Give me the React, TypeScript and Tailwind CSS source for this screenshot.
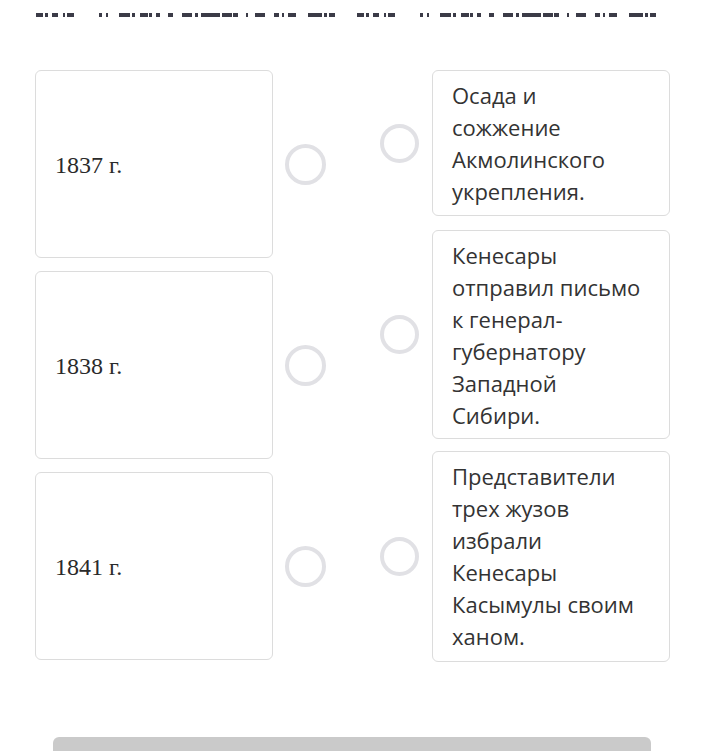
import React from "react";

const seg: [number, number][] = [
  [36, 7], [45, 3], [52, 6], [63, 2], [67, 7], [99, 3], [106, 2], [119, 11], [132, 3],
  [140, 8], [149, 3], [156, 4], [168, 5], [182, 10], [195, 3], [201, 19], [222, 10],
  [233, 5], [246, 2], [255, 10], [274, 5], [282, 2], [288, 8], [308, 14], [324, 3], [329, 6],
];

function Dashes() {
  const all: [number, number][] = [...seg, ...seg.map(([x, w]) => [x + 321, w] as [number, number])];
  return (
    <div className="relative h-[31px]">
      {all.map(([x, w], i) => (
        <div
          key={i}
          className="absolute top-[13px] h-[4px] bg-[#3b3b47]"
          style={{ left: x, width: w }}
        />
      ))}
    </div>
  );
}

function Circle({ size }: { size: "l" | "r" }) {
  return (
    <div
      className={
        size === "l"
          ? "w-[41px] h-[41px] rounded-full border-[4px] border-[#e1e1e5] shrink-0"
          : "w-[39px] h-[39px] rounded-full border-[4px] border-[#e1e1e5] shrink-0"
      }
    />
  );
}

const lefts = ["1837 г.", "1838 г.", "1841 г."];
const rights = [
  ["Осада и", "сожжение", "Акмолинского", "укрепления."],
  ["Кенесары", "отправил письмо", "к генерал-", "губернатору", "Западной", "Сибири."],
  ["Представители", "трех жузов", "избрали", "Кенесары", "Касымулы своим", "ханом."],
];

export default function App() {
  return (
    <div className="w-[704px] h-[751px] bg-white overflow-hidden relative">
      <Dashes />
      <div className="flex mt-[39px] pl-[35px]">
        <div className="flex flex-col gap-[13px]">
          {lefts.map((t) => (
            <div key={t} className="flex items-center gap-[12px]">
              <div
                className="w-[238px] h-[188px] rounded-[6px] border border-[#dcdcdc] flex items-center pl-[19px] text-[24px] text-[#2a2a2a] pt-[2px]"
                style={{ fontFamily: '"Liberation Serif", serif' }}
              >
                {t}
              </div>
              <Circle size="l" />
            </div>
          ))}
        </div>
        <div className="flex flex-col ml-[54px]">
          {rights.map((lines, i) => (
            <div
              key={i}
              className={
                "flex items-center gap-[13px] " + (i === 1 ? "mt-[14px]" : i === 2 ? "mt-[12px]" : "")
              }
            >
              <Circle size="r" />
              <div
                className={
                  "w-[238px] rounded-[6px] border border-[#dcdcdc] pl-[19px] pr-[12px] text-[22px] leading-[32px] text-[#333] " +
                  (i === 2 ? "pt-[8px] pb-[9px]" : i === 1 ? "pt-[8px] pb-[7px]" : "py-[8px]")
                }
                style={{ fontFamily: '"Open Sans", sans-serif' }}
              >
                {lines.map((l, j) => (
                  <div key={j} className="whitespace-nowrap">{l}</div>
                ))}
              </div>
            </div>
          ))}
        </div>
      </div>
      <div className="absolute left-[53px] top-[737px] w-[598px] h-[30px] rounded-t-[6px] bg-[#cacaca]" />
    </div>
  );
}
